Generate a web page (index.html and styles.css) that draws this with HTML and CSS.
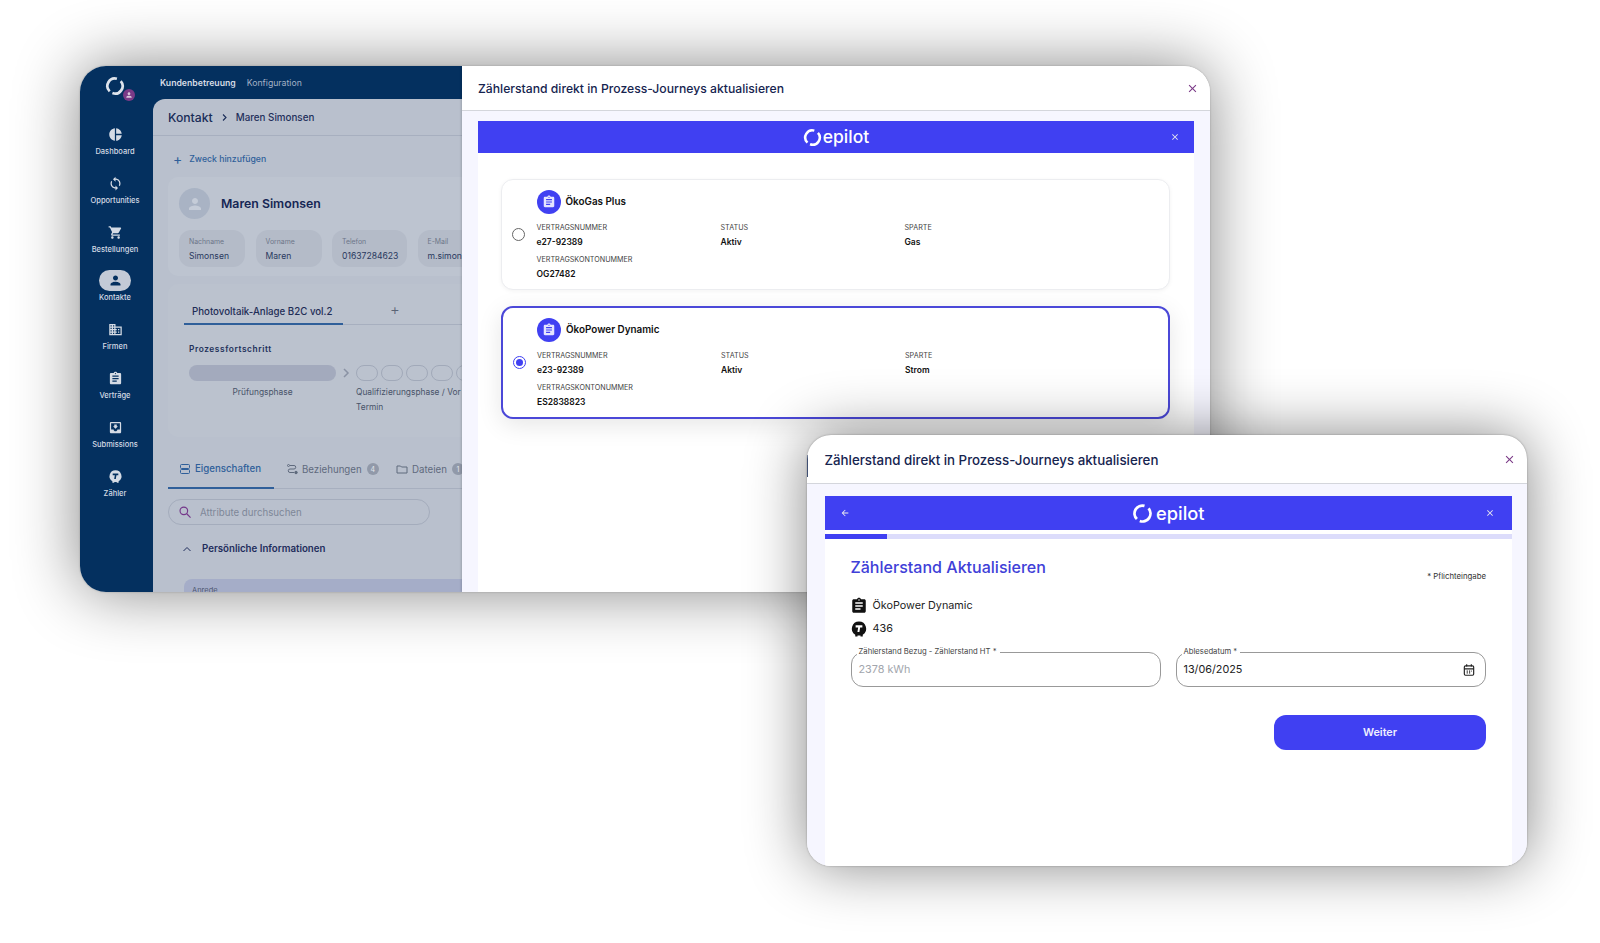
FILE: index.html
```html
<!DOCTYPE html>
<html lang="de">
<head>
<meta charset="utf-8">
<title>Zählerstand</title>
<link rel="stylesheet" href="styles.css">
</head>
<body>
<svg class="defs" width="0" height="0" aria-hidden="true">
  <symbol id="i-pie" viewBox="0 0 24 24"><path d="M11 2v20c-5.07-.5-9-4.79-9-10s3.93-9.5 9-10zm2.03 0v8.99H22c-.47-4.74-4.24-8.52-8.97-8.99zm0 11.01V22c4.74-.47 8.5-4.25 8.97-8.99h-8.97z"/></symbol>
  <symbol id="i-sync" viewBox="0 0 24 24"><path d="M12 4V1L8 5l4 4V6c3.31 0 6 2.69 6 6 0 1.01-.25 1.97-.7 2.8l1.46 1.46C19.54 15.03 20 13.57 20 12c0-4.42-3.58-8-8-8zm0 14c-3.31 0-6-2.69-6-6 0-1.01.25-1.97.7-2.8L5.24 7.74C4.46 8.97 4 10.43 4 12c0 4.42 3.58 8 8 8v3l4-4-4-4v3z"/></symbol>
  <symbol id="i-cart" viewBox="0 0 24 24"><path d="M7 18c-1.1 0-1.99.9-1.99 2S5.9 22 7 22s2-.9 2-2-.9-2-2-2zM1 2v2h2l3.6 7.59-1.35 2.45c-.16.28-.25.61-.25.96 0 1.1.9 2 2 2h12v-2H7.42c-.14 0-.25-.11-.25-.25l.03-.12.9-1.63h7.45c.75 0 1.41-.41 1.75-1.03l3.58-6.49c.08-.14.12-.31.12-.48 0-.55-.45-1-1-1H5.21l-.94-2H1zm16 16c-1.1 0-1.99.9-1.99 2s.89 2 1.99 2 2-.9 2-2-.9-2-2-2z"/></symbol>
  <symbol id="i-person" viewBox="0 0 24 24"><path d="M12 12c2.21 0 4-1.79 4-4s-1.79-4-4-4-4 1.79-4 4 1.79 4 4 4zm0 2c-2.67 0-8 1.34-8 4v2h16v-2c0-2.66-5.33-4-8-4z"/></symbol>
  <symbol id="i-domain" viewBox="0 0 24 24"><path d="M12 7V3H2v18h20V7H12zM6 19H4v-2h2v2zm0-4H4v-2h2v2zm0-4H4V9h2v2zm0-4H4V5h2v2zm4 12H8v-2h2v2zm0-4H8v-2h2v2zm0-4H8V9h2v2zm0-4H8V5h2v2zm10 12h-8v-2h2v-2h-2v-2h2v-2h-2V9h8v10zm-2-8h-2v2h2v-2zm0 4h-2v2h2v-2z"/></symbol>
  <symbol id="i-assign" viewBox="0 0 24 24"><path d="M19 3h-4.18C14.4 1.84 13.3 1 12 1c-1.3 0-2.4.84-2.82 2H5c-1.1 0-2 .9-2 2v14c0 1.1.9 2 2 2h14c1.1 0 2-.9 2-2V5c0-1.1-.9-2-2-2zm-7 0c.55 0 1 .45 1 1s-.45 1-1 1-1-.45-1-1 .45-1 1-1zm2 14H7v-2h7v2zm3-4H7v-2h10v2zm0-4H7V7h10v2z"/></symbol>
  <symbol id="i-inbox" viewBox="0 0 24 24"><path d="M19 3H4.99c-1.11 0-1.98.89-1.98 2L3 19c0 1.1.88 2 1.99 2H19c1.1 0 2-.9 2-2V5c0-1.11-.9-2-2-2zm0 12h-4c0 1.66-1.35 3-3 3s-3-1.34-3-3H4.99V5H19v10zm-3-5h-2V7h-4v3H8l4 4 4-4z"/></symbol>
  <symbol id="i-meter" viewBox="0 0 24 24"><path fill-rule="evenodd" d="M12 2a9.500 9.500 0 0 0-5 17.600V22h3v-1.200h4V22h3v-2.400A9.500 9.500 0 0 0 12 2zM7.500 7h9v3h-3l-1 6h-2.600l1-6H7.500z"/></symbol>
  <symbol id="i-close" viewBox="0 0 24 24"><path d="M19 6.410 17.590 5 12 10.590 6.410 5 5 6.410 10.590 12 5 17.590 6.410 19 12 13.410 17.590 19 19 17.590 13.410 12z"/></symbol>
  <symbol id="i-swoosh" viewBox="0 0 24 24"><g fill="none" stroke="currentColor" stroke-width="3.200"><path d="M14.300 3.300A9 9 0 0 0 5.600 18.400"/><path d="M18.900 6.200A9 9 0 0 1 8.900 20.500"/></g></symbol>
</svg>

<section class="win win-back">
  <aside class="side">
    <div class="brand">
      <svg class="brand-logo"><use href="#i-swoosh"/></svg>
      <span class="brand-badge"><svg class="ico-7"><use href="#i-person"/></svg></span>
    </div>
    <nav class="nav">
      <div class="nav-item"><svg class="nav-ico"><use href="#i-pie"/></svg><span>Dashboard</span></div>
      <div class="nav-item"><svg class="nav-ico"><use href="#i-sync"/></svg><span>Opportunities</span></div>
      <div class="nav-item"><svg class="nav-ico"><use href="#i-cart"/></svg><span>Bestellungen</span></div>
      <div class="nav-item nav-on"><span class="nav-pill"><svg class="nav-ico"><use href="#i-person"/></svg></span><span>Kontakte</span></div>
      <div class="nav-item"><svg class="nav-ico"><use href="#i-domain"/></svg><span>Firmen</span></div>
      <div class="nav-item"><svg class="nav-ico"><use href="#i-assign"/></svg><span>Verträge</span></div>
      <div class="nav-item"><svg class="nav-ico"><use href="#i-inbox"/></svg><span>Submissions</span></div>
      <div class="nav-item"><svg class="nav-ico"><use href="#i-meter"/></svg><span>Zähler</span></div>
    </nav>
  </aside>

  <div class="main">
    <header class="topbar"><b>Kundenbetreuung</b><span>Konfiguration</span></header>
    <div class="panel">
      <div class="crumbs"><span class="crumb-a">Kontakt</span><svg class="crumb-sep" viewBox="0 0 24 24"><path class="line thick" d="m8 4 8 8-8 8"/></svg><span class="crumb-b">Maren Simonsen</span></div>
      <div class="panel-body">
        <div class="purpose"><span class="purpose-plus">+</span><span>Zweck hinzufügen</span></div>
        <div class="person-card">
          <div class="person-head">
            <span class="avatar"><svg class="ico-18"><use href="#i-person"/></svg></span>
            <span class="person-name">Maren Simonsen</span>
          </div>
          <div class="chips">
            <div class="chip chip-a"><small>Nachname</small><span>Simonsen</span></div>
            <div class="chip chip-a"><small>Vorname</small><span>Maren</span></div>
            <div class="chip chip-b"><small>Telefon</small><span>01637284623</span></div>
            <div class="chip chip-c"><small>E-Mail</small><span>m.simonsen@epilot.cloud</span></div>
          </div>
        </div>
        <div class="process">
          <div class="ptabs"><span class="ptab">Photovoltaik-Anlage B2C vol.2</span><span class="ptab-plus">+</span></div>
          <div class="ptitle">Prozessfortschritt</div>
          <div class="steps">
            <span class="step-main"></span><svg class="step-chev" viewBox="0 0 24 24"><path class="line thick" d="m8 4 8 8-8 8"/></svg>
            <span class="oval"></span><span class="oval"></span><span class="oval"></span><span class="oval"></span><span class="oval"></span>
          </div>
          <div class="step-labels">
            <span class="sl-a">Prüfungsphase</span>
            <span class="sl-b">Qualifizierungsphase / Vor Termin</span>
          </div>
        </div>
        <div class="tabs">
          <div class="tab tab-on"><svg class="ico-12 line" viewBox="0 0 24 24"><rect x="3" y="3" width="18" height="8" rx="2"/><rect x="3" y="13" width="18" height="8" rx="2"/></svg><span>Eigenschaften</span></div>
          <div class="tab tab-b"><svg class="ico-12 line" viewBox="0 0 24 24"><circle cx="5" cy="5" r="2"/><path d="M8 5h8a3.500 3.500 0 0 1 0 7H8a3.500 3.500 0 0 0 0 7h8"/><circle class="dot" cx="20" cy="19" r="2.500"/></svg><span>Beziehungen</span><em class="count">4</em></div>
          <div class="tab tab-c"><svg class="ico-12 line" viewBox="0 0 24 24"><path d="M2 6h7l2 2h11v12H2z"/></svg><span>Dateien</span><em class="count">1</em></div>
        </div>
        <div class="search">
          <svg class="ico-14 search-ico line" viewBox="0 0 24 24"><circle cx="10" cy="10" r="6.500"/><path d="m15 15 6.500 6.500"/></svg>
          <span>Attribute durchsuchen</span>
        </div>
        <div class="section-head"><svg class="ico-12 line thick" viewBox="0 0 24 24"><path d="m5 16 7-7 7 7"/></svg><span>Persönliche Informationen</span></div>
        <div class="anrede">Anrede</div>
      </div>
    </div>
  </div>

  <div class="modal">
    <header class="m-head"><h2>Zählerstand direkt in Prozess-Journeys aktualisieren</h2><svg class="m-x"><use href="#i-close"/></svg></header>
    <div class="m-body">
      <div class="banner">
        <span class="logo"><svg class="logo-ico"><use href="#i-swoosh"/></svg><span>epilot</span></span>
        <svg class="banner-x"><use href="#i-close"/></svg>
      </div>
      <div class="list">
        <article class="card">
          <span class="radio"></span>
          <div class="card-main">
            <div class="card-title"><span class="disc"><svg class="ico-14"><use href="#i-assign"/></svg></span><b>ÖkoGas Plus</b></div>
            <div class="fields">
              <div class="field"><small>VERTRAGSNUMMER</small><b>e27-92389</b></div>
              <div class="field"><small>STATUS</small><b>Aktiv</b></div>
              <div class="field"><small>SPARTE</small><b>Gas</b></div>
              <div class="field"><small>VERTRAGSKONTONUMMER</small><b>OG27482</b></div>
            </div>
          </div>
        </article>
        <article class="card card-on">
          <span class="radio radio-on"></span>
          <div class="card-main">
            <div class="card-title"><span class="disc"><svg class="ico-14"><use href="#i-assign"/></svg></span><b>ÖkoPower Dynamic</b></div>
            <div class="fields">
              <div class="field"><small>VERTRAGSNUMMER</small><b>e23-92389</b></div>
              <div class="field"><small>STATUS</small><b>Aktiv</b></div>
              <div class="field"><small>SPARTE</small><b>Strom</b></div>
              <div class="field"><small>VERTRAGSKONTONUMMER</small><b>ES2838823</b></div>
            </div>
          </div>
        </article>
      </div>
    </div>
  </div>
</section>

<section class="win win-front">
  <header class="f-head"><h2>Zählerstand direkt in Prozess-Journeys aktualisieren</h2><svg class="f-x"><use href="#i-close"/></svg></header>
  <div class="f-body">
    <div class="f-sheet">
      <div class="f-banner">
        <svg class="f-back" viewBox="0 0 24 24"><path d="M20 11H7.830l5.590-5.590L12 4l-8 8 8 8 1.410-1.410L7.830 13H20z"/></svg>
        <span class="logo logo-lg"><svg class="logo-ico"><use href="#i-swoosh"/></svg><span>epilot</span></span>
        <svg class="banner-x f-banner-x"><use href="#i-close"/></svg>
      </div>
      <div class="progress"><span class="progress-fill"></span></div>
      <div class="form">
        <div class="form-head"><h3>Zählerstand Aktualisieren</h3><span class="req">* Pflichteingabe</span></div>
        <div class="meta"><svg><use href="#i-assign"/></svg><span>ÖkoPower Dynamic</span></div>
        <div class="meta"><svg><use href="#i-meter"/></svg><span>436</span></div>
        <div class="inputs">
          <div class="input">
            <label>Zählerstand Bezug - Zählerstand HT *</label>
            <span class="ph">2378 kWh</span>
          </div>
          <div class="input">
            <label>Ablesedatum *</label>
            <span>13/06/2025</span>
            <svg class="cal line" viewBox="0 0 24 24"><rect x="4" y="5" width="16" height="16" rx="2"/><path d="M4 10h16M8 2v4M16 2v4M8 14h2M12 14h2M16 14h1M8 17h2M12 17h2"/></svg>
          </div>
        </div>
        <div class="actions"><button class="btn">Weiter</button></div>
      </div>
    </div>
  </div>
</section>
</body>
</html>
```

FILE: styles.css
```css
* { box-sizing: border-box; }
html, body { margin: 0; height: 943px; background: #fff; overflow: hidden; }
body { position: relative; font-family: "Inter", "Liberation Sans", sans-serif; color: #16244f; }
.defs { position: absolute; }
h2, h3 { margin: 0; }
svg { fill: currentColor; display: block; flex: none; }
svg.line, .line { fill: none; stroke: currentColor; stroke-width: 2; }
.thick { stroke-width: 3; }
.dot { fill: currentColor; }
.ico-7 { width: 8px; height: 8px; }
.ico-12 { width: 12px; height: 12px; }
.ico-14 { width: 14px; height: 14px; }
.ico-18 { width: 18px; height: 18px; }

.win { position: absolute; overflow: hidden; background: #fff; }
.win-back {
  left: 80px; top: 66px; width: 1130px; height: 526px;
  border-radius: 26px; display: flex;
  box-shadow: 0 0 2px rgba(0,0,0,.25), 0 0 65px rgba(0,0,0,.48);
}
.win-front {
  left: 807px; top: 435px; width: 720px; height: 431px;
  border-radius: 24px; display: flex; flex-direction: column;
  box-shadow: 0 0 2px rgba(0,0,0,.35), 0 0 60px rgba(0,0,0,.48);
}
.win-front::before { content: ""; position: absolute; left: 0; top: 20px; width: 1px; height: 22px; background: #3f4f72; }

/* sidebar */
.side { width: 70px; flex: none; background: #04305f; color: #d5dbe5; display: flex; flex-direction: column; align-items: center; }
.brand { position: relative; height: 45px; width: 100%; flex: none; }
.brand-logo { width: 20px; height: 20px; position: absolute; left: 25px; top: 10px; color: #dfe4ec; }
.brand-badge { position: absolute; left: 43px; top: 23px; width: 12px; height: 12px; border-radius: 50%; background: #7b3a87; display: flex; align-items: center; justify-content: center; color: #d9c7dd; }
.nav { display: flex; flex-direction: column; width: 100%; padding-top: 16px; }
.nav-item { height: 48.800px; display: flex; flex-direction: column; align-items: center; gap: 5px; font-size: 7.500px; font-weight: 500; white-space: nowrap; }
.nav-ico { width: 15px; height: 15px; }
.nav-pill { width: 32px; height: 21px; margin-top: -3px; margin-bottom: -3px; border-radius: 11px; background: #c3cad6; color: #04305f; display: flex; align-items: center; justify-content: center; flex: none; }

/* main */
.main { width: 312px; flex: none; background: #04305f; display: flex; flex-direction: column; overflow: hidden; }
.topbar { height: 33px; flex: none; display: flex; align-items: center; gap: 11px; padding-left: 10px; font-size: 8.700px; color: #a3b1c6; }
.topbar b { color: #d5dbe5; font-weight: 600; }
.panel { flex: 1; min-height: 0; margin-left: 3px; background: #b9c0cd; border-top-left-radius: 12px; overflow: hidden; }
.crumbs { height: 37px; display: flex; align-items: center; padding-left: 15px; border-bottom: 1px solid #a7afbf; }
.crumb-a { font-size: 12.200px; font-weight: 500; color: #1a2c58; }
.crumb-sep { width: 9px; height: 9px; margin: 0 7px; color: #1a2c58; }
.crumb-b { font-size: 9.800px; font-weight: 500; color: #1f2f5b; }
.panel-body { padding: 0 0 0 15px; width: 309px; }
.purpose { height: 17px; margin-top: 14px; display: flex; align-items: center; gap: 7px; padding-left: 5px; font-size: 8.700px; font-weight: 500; color: #2f5f9a; }
.purpose-plus { font-size: 14px; font-weight: 400; }
.person-card { margin-top: 10px; height: 99px; border-radius: 10px; background: #bdc4d0; padding: 11px 0 0 11px; width: 320px; overflow: hidden; }
.person-head { display: flex; align-items: center; gap: 11px; }
.avatar { width: 31px; height: 31px; border-radius: 50%; background: #a9b3c4; color: #c5ccd8; display: flex; align-items: center; justify-content: center; }
.person-name { font-size: 12.300px; font-weight: 600; color: #152654; }
.chips { display: flex; gap: 10.500px; margin-top: 11px; }
.chip { height: 37px; border-radius: 12px; background: #b4bbc8; padding: 7px 0 0 10px; display: flex; flex-direction: column; gap: 5px; font-size: 8.600px; color: #29395e; white-space: nowrap; overflow: hidden; flex: none; }
.chip small { font-size: 6.900px; color: #6d7688; }
.chip-a { width: 66px; }
.chip-b { width: 75px; }
.chip-c { width: 100px; }
.process { height: 153px; margin-top: 8px; background: #bbc2ce; border-radius: 10px; margin-right: -12px; padding-left: 16px; overflow: hidden; }
.ptabs { height: 41px; display: flex; align-items: flex-end; border-bottom: 1px solid #a7afbf; width: 294px; }
.ptab { width: 159px; height: 28px; padding: 2px 0 0 8px; font-size: 9.700px; font-weight: 500; border-bottom: 2px solid #2f5f9a; color: #1e2d56; margin-bottom: -1px; white-space: nowrap; display: flex; align-items: center; flex: none; }
.ptab-plus { margin: 0 0 5px 47px; font-size: 15px; font-weight: 300; color: #5a6475; }
.ptitle { margin: 19px 0 0 5px; font-size: 8.300px; font-weight: 600; letter-spacing: .6px; color: #22315a; }
.steps { display: flex; align-items: center; gap: 3px; margin: 11px 0 0 5px; height: 16px; }
.step-main { width: 147px; height: 16px; border-radius: 8px; background: #a3aabd; flex: none; }
.step-chev { width: 14px; height: 12px; color: #8a92a4; }
.oval { width: 22px; height: 16px; border-radius: 8px; border: 1px solid #a1a9b9; flex: none; }
.step-labels { display: flex; margin: 4px 0 0 5px; font-size: 8.400px; line-height: 15px; color: #485369; }
.sl-a { width: 147px; text-align: center; flex: none; }
.sl-b { margin-left: 20px; width: 125px; flex: none; }
.tabs { display: flex; height: 37px; margin-top: 15px; border-bottom: 1px solid #a7afbf; width: 294px; align-items: stretch; font-size: 9.700px; color: #5f6a7d; white-space: nowrap; }
.tab { display: flex; align-items: center; gap: 4px; flex: none; padding-bottom: 2px; }
.tab-on { width: 106px; padding-left: 11px; color: #2f5f9a; font-weight: 500; border-bottom: 2px solid #2f5f9a; margin-bottom: -1px; }
.tab-b { padding-left: 12px; width: 122px; }
.count { font-style: normal; width: 12px; height: 12px; border-radius: 50%; background: #9199a9; color: #e2e5ec; font-size: 7px; display: flex; align-items: center; justify-content: center; margin-left: 1px; }
.search { margin-top: 10px; width: 262px; height: 26px; border: 1px solid #a4acbc; border-radius: 13px; display: flex; align-items: center; gap: 8px; padding-left: 9px; font-size: 9.700px; color: #7e8798; }
svg.search-ico { color: #75388a; }
.section-head { display: flex; align-items: center; gap: 9px; margin-top: 11px; height: 25px; padding-left: 13px; font-size: 9.700px; font-weight: 600; color: #1f2d5c; }
.anrede { margin: 18px 0 0 16px; height: 30px; border-radius: 8px 0 0 0; background: #a5adc8; padding: 7px 0 0 8px; font-size: 7.500px; color: #4e5670; }

/* modal */
.modal { flex: 1; min-width: 0; background: #fff; display: flex; flex-direction: column; box-shadow: -1px 0 2px rgba(0,0,0,.15); position: relative; }
.m-head { height: 45px; flex: none; display: flex; align-items: center; justify-content: space-between; padding: 0 11px 0 16px; border-bottom: 1px solid #d4d6dc; }
.m-head h2 { font-size: 12.200px; font-weight: 500; color: #16244f; }
.m-x { width: 13px; height: 13px; color: #7b3a87; }
.m-body { flex: 1; background: #f6f6ff; padding: 10px 16px 0; }
.banner { height: 32px; background: #4040f2; color: #fff; display: flex; align-items: center; justify-content: center; position: relative; }
.banner-x { width: 10px; height: 10px; color: #eee; position: absolute; right: 14px; top: 50%; margin-top: -5px; }
.f-banner-x { right: 17px; }
.logo { display: flex; align-items: center; gap: 1px; font-size: 17.500px; font-weight: 500; line-height: 1; }
.logo-ico { width: 19px; height: 19px; }
.list { background: #fff; height: 440px; padding: 26px 24px 0 23px; display: flex; flex-direction: column; gap: 16px; }
.card { height: 111px; border: 1px solid #ecedf0; border-radius: 12px; background: #fff; display: flex; align-items: flex-start; padding: 10px 0 0 10px; box-shadow: 0 1px 4px rgba(0,0,0,.05); }
.card-on { height: 113px; border: 2px solid #4b48d8; padding-left: 9.500px; box-shadow: 0 6px 24px rgba(0,0,0,.1); }
.radio { width: 13px; height: 13px; border-radius: 50%; border: 1.500px solid #666; flex: none; align-self: center; margin-top: -10px; }
.radio-on { border-color: #4040f2; position: relative; }
.radio-on::after { content: ""; position: absolute; inset: 2px; border-radius: 50%; background: #4040f2; }
.card-main { margin-left: 11.500px; }
.card-title { display: flex; align-items: center; gap: 5px; font-size: 9.900px; color: #111; }
.card-title b { font-weight: 600; padding-bottom: 2px; }
.disc { width: 24px; height: 24px; border-radius: 50%; background: #4040f2; color: #e5e5ff; display: flex; align-items: center; justify-content: center; }
.fields { display: grid; grid-template-columns: repeat(3, 184px); row-gap: 6.500px; margin-top: 9px; }
.field { display: flex; flex-direction: column; gap: 5px; white-space: nowrap; }
.field small { font-size: 7.200px; color: #444; line-height: 9px; }
.field b { font-size: 8.500px; font-weight: 600; color: #111; line-height: 11px; }

/* front */
.f-head { height: 49px; flex: none; display: flex; align-items: center; justify-content: space-between; padding: 1px 11px 0 17.500px; border-bottom: 1px solid #d4d6dc; }
.f-head h2 { font-size: 13.300px; font-weight: 500; color: #16244f; }
.f-x { width: 13px; height: 13px; color: #7b3a87; }
.f-body { flex: 1; min-height: 0; background: #f6f6ff; padding: 12px 15px 0 17.500px; }
.f-sheet { height: 100%; background: #fff; }
.f-banner { height: 34px; background: #4040f2; color: #fff; display: flex; align-items: center; justify-content: center; position: relative; }
.f-back { position: absolute; left: 15px; top: 12px; width: 10px; height: 10px; color: #eee; }
.logo-lg { font-size: 18.300px; gap: 3px; }
.logo-lg .logo-ico { width: 21px; height: 21px; }
.progress { margin-top: 4px; height: 5px; background: #dcdcfb; }
.progress-fill { display: block; width: 62px; height: 100%; background: #4040f2; }
.form { padding: 18px 26px 0; }
.form-head { display: flex; justify-content: space-between; align-items: flex-start; height: 37px; }
.form-head h3 { font-size: 16.050px; font-weight: 500; color: #4040d8; }
.req { font-size: 7.800px; color: #333; margin-top: 14px; }
.meta { display: flex; align-items: center; gap: 5px; height: 23px; margin-left: -1px; font-size: 10.800px; color: #222; }
.meta svg { width: 18px; height: 18px; color: #111; }
.inputs { display: flex; gap: 14.500px; margin-top: 12px; }
.input { position: relative; flex: 1; height: 35px; border: 1px solid #999; border-radius: 12px; padding: 0 9px 0 7px; display: flex; align-items: center; justify-content: space-between; font-size: 10.800px; color: #222; }
.input label { position: absolute; left: 5px; top: -6px; padding: 0 3px 0 2px; background: #fff; font-size: 7.700px; line-height: 10px; color: #444; }
.ph { color: #a2a6ad; }
.cal { width: 14px; height: 14px; color: #222; }
.actions { display: flex; justify-content: flex-end; margin-top: 28px; }
.btn { width: 212px; height: 35px; border: 0; border-radius: 12px; background: #4040f2; color: #f0f0ff; font: 600 10.800px "Inter", sans-serif; }
```
